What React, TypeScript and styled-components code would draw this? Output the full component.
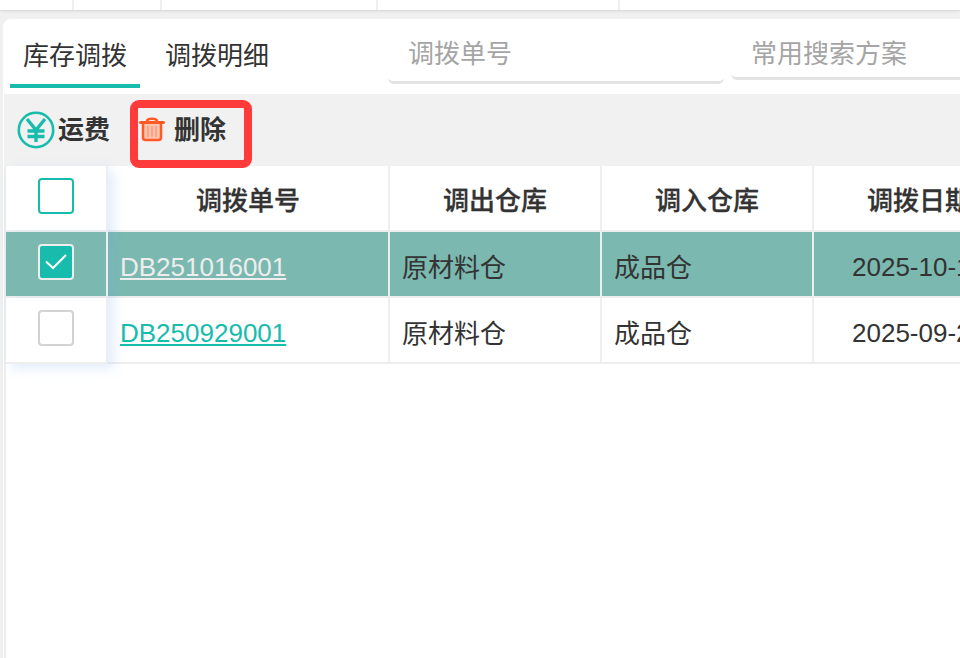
import React from "react";
import styled, { createGlobalStyle } from "styled-components";

const Global = createGlobalStyle`
  html, body { margin: 0; padding: 0; width: 960px; height: 658px; overflow: hidden; background: #f0f0f0; }
  * { box-sizing: border-box; }
  body { font-family: "Liberation Sans", "Noto Sans CJK SC", sans-serif; color: #333; }
`;

const Page = styled.div`
  width: 960px;
  height: 658px;
  overflow: hidden;
  display: flex;
  flex-direction: column;
`;

const TopStrip = styled.div`
  height: 10px;
  flex: none;
  background: #fff;
  display: flex;
  box-shadow: 0 1px 3px rgba(0, 0, 0, 0.12);
`;

const TopCell = styled.div<{ $w: number }>`
  width: ${(p) => p.$w}px;
  flex: none;
  border-right: 2px solid #eeeeee;
`;

const Card = styled.div`
  margin: 9px 0 0 3px;
  flex: 1;
  width: 1200px;
  background: #fff;
  border-radius: 8px 0 0 0;
  display: flex;
  flex-direction: column;
  min-height: 0;
`;

const TabRow = styled.div`
  height: 75px;
  flex: none;
  display: flex;
  align-items: flex-start;
  padding-left: 7px;
`;

const Tab = styled.div<{ $active?: boolean; $w: number }>`
  width: ${(p) => p.$w}px;
  height: 69px;
  flex: none;
  padding-top: 19px;
  font-size: 26px;
  line-height: 36px;
  text-align: center;
  color: #333;
  border-bottom: 4px solid ${(p) => (p.$active ? "#17bcac" : "transparent")};
`;

const SearchBox = styled.div<{ $w: number; $h: number; $ml: number }>`
  width: ${(p) => p.$w}px;
  height: ${(p) => p.$h}px;
  margin-left: ${(p) => p.$ml}px;
  flex: none;
  padding: 17px 0 0 20px;
  font-size: 26px;
  line-height: 36px;
  color: #a5a5a5;
  border-bottom: 3px solid #e4e4e4;
  border-radius: 0 0 6px 6px;
`;

const Toolbar = styled.div`
  height: 72px;
  flex: none;
  background: #f1f1f1;
  display: flex;
  align-items: flex-start;
  margin-left: 1px;
`;

const ToolButton = styled.div`
  display: flex;
  align-items: center;
  font-size: 26px;
  font-weight: 700;
  color: #333;
`;

const FreightButton = styled(ToolButton)`
  width: 126px;
  height: 72px;
  padding: 0 0 0 13px;
  gap: 3px;
`;

const ButtonText = styled.span`
  line-height: 36px;
`;

const DeleteButton = styled(ToolButton)`
  position: relative;
  z-index: 2;
  width: 122px;
  height: 68px;
  margin-top: 6px;
  padding: 0 0 8px 1px;
  border: 8px solid #ff3a3a;
  border-radius: 9px;
  gap: 9px;
`;

const TrashSvg = styled.svg`
  margin-top: -2px;
  flex: none;
`;

const TableArea = styled.div`
  flex: 1;
  margin-left: 1px;
  border-left: 2px solid #eeeeee;
  min-height: 0;
`;

const Table = styled.div`
  display: grid;
  grid-template-columns: 102px 282px 212px 212px 212px;
  justify-content: start;
  grid-auto-rows: 66px;
  position: relative;
`;

const Cell = styled.div<{ $sel?: boolean; $center?: boolean }>`
  display: flex;
  align-items: center;
  justify-content: ${(p) => (p.$center ? "center" : "flex-start")};
  padding: ${(p) => (p.$center ? "0" : "3px 0 0 12px")};
  background: ${(p) => (p.$sel ? "#7bb9b0" : "#fff")};
  border-right: 2px solid #eeeeee;
  border-bottom: 2px solid #eeeeee;
  font-size: 26px;
  color: #333;
  white-space: nowrap;
`;

const CheckCell = styled(Cell)`
  position: relative;
  z-index: 1;
  padding: 0 0 4px;
  box-shadow: 5px 4px 12px rgba(110, 165, 240, 0.22);
`;

const LinkCell = styled(Cell)`
  padding-top: 7px;
`;

const DateCell = styled(Cell)`
  padding: 7px 0 0 38px;
`;

const HeadLabel = styled.span`
  font-weight: 500;
  -webkit-text-stroke: 0.3px #333;
`;

const OrderLink = styled.a<{ $sel?: boolean }>`
  color: ${(p) => (p.$sel ? "#ededed" : "#17bcac")};
  text-decoration: underline;
`;

const CheckBox = styled.div<{ $kind: "head" | "on" | "off" }>`
  width: 36px;
  height: 36px;
  border-radius: 4px;
  border: 2px solid
    ${(p) => (p.$kind === "head" ? "#17bcac" : p.$kind === "on" ? "#eeeeee" : "#d2d2d2")};
  background: ${(p) => (p.$kind === "on" ? "#17bcac" : "#fff")};
  display: flex;
  align-items: center;
  justify-content: center;
`;

const YenIcon = () => (
  <svg width="38" height="38" viewBox="0 0 38 38" fill="none">
    <circle cx="19" cy="19" r="17.2" stroke="#17bcac" strokeWidth="2.6" />
    <path d="M10 8 19 19l9-11M19 19v12M10.500 20h17M10.500 25.500h17" stroke="#17bcac" strokeWidth="3.400" />
  </svg>
);

const TrashIcon = () => (
  <TrashSvg width="26" height="26" viewBox="0 0 26 26" fill="none">
    <path d="M1.500 6.500h23" stroke="#ff5a26" strokeWidth="3" strokeLinecap="round" />
    <path d="M8 5c.5-3 9.500-3 10 0" stroke="#ff5a26" strokeWidth="2.500" />
    <path d="M4 8v13.500a2.500 2.500 0 0 0 2.500 2.500h13a2.500 2.500 0 0 0 2.500-2.500V8" fill="#ffc4b0" stroke="#ff5a26" strokeWidth="2.500" />
    <path d="M9 10v11M13 10v11M17 10v11" stroke="#ff8a66" strokeWidth="1.200" />
  </TrashSvg>
);

const Tick = () => (
  <svg width="24" height="18" viewBox="0 0 24 18" fill="none">
    <path d="M2 8.500 9 15 22 2" stroke="#fff" strokeWidth="2" />
  </svg>
);

const topCells = [74, 88, 216, 242];
const columns = ["调拨单号", "调出仓库", "调入仓库", "调拨日期"];
const rows = [
  { id: "DB251016001", from: "原材料仓", to: "成品仓", date: "2025-10-16", sel: true },
  { id: "DB250929001", from: "原材料仓", to: "成品仓", date: "2025-09-29", sel: false },
];

export default function App() {
  return (
    <Page>
      <Global />
      <TopStrip>
        {topCells.map((w, i) => (
          <TopCell key={i} $w={w} />
        ))}
      </TopStrip>
      <Card>
        <TabRow>
          <Tab $active $w={130}>库存调拨</Tab>
          <Tab $w={154}>调拨明细</Tab>
          <SearchBox $w={336} $h={65} $ml={94}>调拨单号</SearchBox>
          <SearchBox $w={300} $h={61} $ml={7}>常用搜索方案</SearchBox>
        </TabRow>
        <Toolbar>
          <FreightButton><YenIcon /><ButtonText>运费</ButtonText></FreightButton>
          <DeleteButton><TrashIcon /><ButtonText>删除</ButtonText></DeleteButton>
        </Toolbar>
        <TableArea>
          <Table>
            <CheckCell $center><CheckBox $kind="head" /></CheckCell>
            {columns.map((c) => (
              <Cell key={c} $center><HeadLabel>{c}</HeadLabel></Cell>
            ))}
            {rows.map((r) => (
              <React.Fragment key={r.id}>
                <CheckCell $center $sel={r.sel}>
                  <CheckBox $kind={r.sel ? "on" : "off"}>{r.sel && <Tick />}</CheckBox>
                </CheckCell>
                <LinkCell $sel={r.sel}><OrderLink $sel={r.sel}>{r.id}</OrderLink></LinkCell>
                <Cell $sel={r.sel}>{r.from}</Cell>
                <Cell $sel={r.sel}>{r.to}</Cell>
                <DateCell $sel={r.sel}>{r.date}</DateCell>
              </React.Fragment>
            ))}
          </Table>
        </TableArea>
      </Card>
    </Page>
  );
}
